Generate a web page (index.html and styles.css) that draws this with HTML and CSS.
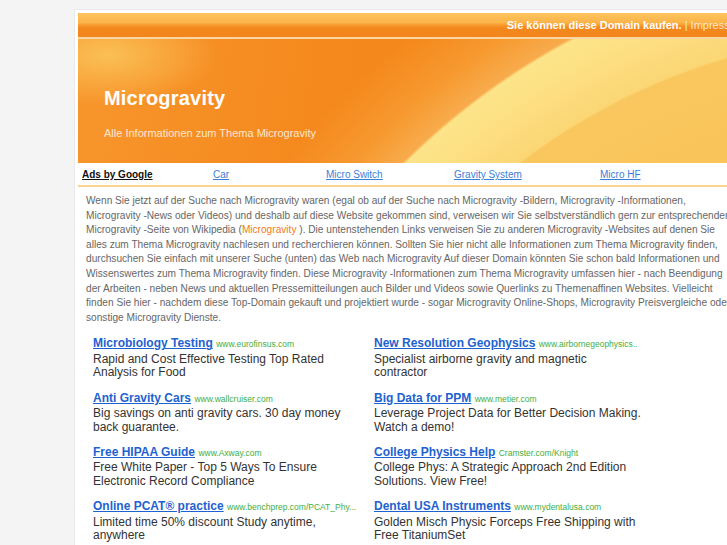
FILE: index.html
```html
<!DOCTYPE html>
<html lang="de">
<head>
<meta charset="utf-8">
<title>Microgravity</title>
<link rel="stylesheet" href="styles.css">
</head>
<body>
<div class="page">
  <div class="topbar"><b>Sie können diese Domain kaufen.</b> <span class="sep">|</span> <span class="imp">Impressum</span></div>
  <div class="header">
    <h1 class="title">Microgravity</h1>
    <p class="subtitle">Alle Informationen zum Thema Microgravity</p>
  </div>
  <div class="nav">
    <span class="cell c1"><a class="adsby" href="#">Ads by Google</a></span>
    <span class="cell c2"><a href="#">Car</a></span>
    <span class="cell c3"><a href="#">Micro Switch</a></span>
    <span class="cell c4"><a href="#">Gravity System</a></span>
    <span class="cell c5"><a href="#">Micro HF</a></span>
  </div>
  <p class="intro">Wenn Sie jetzt auf der Suche nach Microgravity waren (egal ob auf der Suche nach Microgravity -Bildern, Microgravity -Informationen, Microgravity -News oder Videos) und deshalb auf diese Website gekommen sind, verweisen wir Sie selbstverständlich gern zur entsprechenden Microgravity -Seite von Wikipedia (<a href="#">Microgravity</a> ). Die untenstehenden Links verweisen Sie zu anderen Microgravity -Websites auf denen Sie alles zum Thema Microgravity nachlesen und recherchieren können. Sollten Sie hier nicht alle Informationen zum Thema Microgravity finden, durchsuchen Sie einfach mit unserer Suche (unten) das Web nach Microgravity Auf dieser Domain könnten Sie schon bald Informationen und Wissenswertes zum Thema Microgravity finden. Diese Microgravity -Informationen zum Thema Microgravity umfassen hier - nach Beendigung der Arbeiten - neben News und aktuellen Pressemitteilungen auch Bilder und Videos sowie Querlinks zu Themenaffinen Websites. Vielleicht finden Sie hier - nachdem diese Top-Domain gekauft und projektiert wurde - sogar Microgravity Online-Shops, Microgravity Preisvergleiche oder sonstige Microgravity Dienste.</p>
  <div class="ads">
    <div class="ad"><div class="ad-head"><a href="#">Microbiology Testing</a> <span class="url">www.eurofinsus.com</span></div><div class="desc">Rapid and Cost Effective Testing Top Rated Analysis for Food</div></div>
    <div class="ad"><div class="ad-head"><a href="#">New Resolution Geophysics</a> <span class="url">www.airbornegeophysics..</span></div><div class="desc">Specialist airborne gravity and magnetic contractor</div></div>
    <div class="ad"><div class="ad-head"><a href="#">Anti Gravity Cars</a> <span class="url">www.wallcruiser.com</span></div><div class="desc">Big savings on anti gravity cars. 30 day money back guarantee.</div></div>
    <div class="ad"><div class="ad-head"><a href="#">Big Data for PPM</a> <span class="url">www.metier.com</span></div><div class="desc">Leverage Project Data for Better Decision Making. Watch a demo!</div></div>
    <div class="ad"><div class="ad-head"><a href="#">Free HIPAA Guide</a> <span class="url">www.Axway.com</span></div><div class="desc">Free White Paper - Top 5 Ways To Ensure Electronic Record Compliance</div></div>
    <div class="ad"><div class="ad-head"><a href="#">College Physics Help</a> <span class="url">Cramster.com/Knight</span></div><div class="desc">College Phys: A Strategic Approach 2nd Edition Solutions. View Free!</div></div>
    <div class="ad"><div class="ad-head"><a href="#">Online PCAT® practice</a> <span class="url">www.benchprep.com/PCAT_Phy...</span></div><div class="desc">Limited time 50% discount Study anytime, anywhere</div></div>
    <div class="ad"><div class="ad-head"><a href="#">Dental USA Instruments</a> <span class="url">www.mydentalusa.com</span></div><div class="desc">Golden Misch Physic Forceps Free Shipping with Free TitaniumSet</div></div>
  </div>
</div>
</body>
</html>
```
FILE: styles.css
```css
html, body {
  margin: 0;
  padding: 0;
  overflow: hidden;
  background: #f4f4f4;
  font-family: "Liberation Sans", Arial, sans-serif;
}

.page {
  margin: 9px 0 0 74px;
  width: 675px;
  padding: 3px;
  border: 1px solid #e9e9e9;
  background: #fff;
}

.topbar {
  height: 24px;
  line-height: 24px;
  padding-right: 8px;
  text-align: right;
  font-size: 11px;
  color: #fff;
  white-space: nowrap;
  background: linear-gradient(#fdc45e 0%, #fbb449 40%, #f7982c 52%, #f3881d 62%, #f2851b 100%);
  border-bottom: 2px solid #fcd6a2;
}

.topbar b { font-weight: bold; }
.topbar .sep { color: #fde9d0; }
.topbar .imp { color: #fde6c8; }

.header {
  height: 124px;
  padding: 47px 0 0 26px;
  box-sizing: border-box;
  background:
    radial-gradient(ellipse 110px 50px at 30px 16px, rgba(252, 206, 100, 0.75), rgba(250, 190, 80, 0) 100%),
    radial-gradient(circle at 826px 626px,
      #f8c053 0px, #f9c55b 560px, #f9c75e 631px,
      #fbd674 633px, #fde084 680px, #fde489 707px,
      #f8ab4c 710px, #f6992f 745px, rgba(245, 140, 30, 0) 800px),
    linear-gradient(100deg, #f7962c 0%, #f5891e 35%, #f5861a 60%, #f5861a 100%);
}

.title {
  margin: 0;
  font-size: 20px;
  line-height: 24px;
  font-weight: bold;
  color: #fff;
  letter-spacing: 0.2px;
}

.subtitle {
  margin: 16px 0 0;
  font-size: 11px;
  line-height: 14px;
  color: #fde7cf;
}

.nav {
  display: flex;
  height: 24px;
  box-sizing: border-box;
  padding: 1px 0 0 4px;
  align-items: center;
  font-size: 10px;
  border-bottom: 2px solid #fbd490;
  white-space: nowrap;
  overflow: hidden;
}

.cell { flex: none; }
.c1 { width: 131px; }
.c2 { width: 113px; }
.c3 { width: 128px; }
.c4 { width: 146px; }
.c5 { width: 100px; }

.nav a { color: #3a7ed6; text-decoration: underline; }
.nav a.adsby { color: #111; font-weight: bold; }

.intro {
  margin: 0;
  padding: 7px 15px 0 8px;
  font-size: 10.15px;
  line-height: 14.6px;
  color: #666;
}

.intro a { color: #f47a20; text-decoration: none; }

.ads {
  display: grid;
  grid-template-columns: 281px 281px;
  padding: 10px 0 0 15px;
}

.ad {
  padding-bottom: 9.8px;
}

.ad-head {
  height: 16px;
  font-size: 12px;
  line-height: 16px;
  white-space: nowrap;
}

.ad-head a {
  color: #1e62d0;
  font-weight: bold;
  text-decoration: underline;
}

.url {
  font-size: 8.5px;
  line-height: 10px;
  color: #3fae3f;
}

.desc {
  margin-top: 1.5px;
  width: 267.5px;
  font-size: 12px;
  line-height: 13.5px;
  color: #333;
}
```
